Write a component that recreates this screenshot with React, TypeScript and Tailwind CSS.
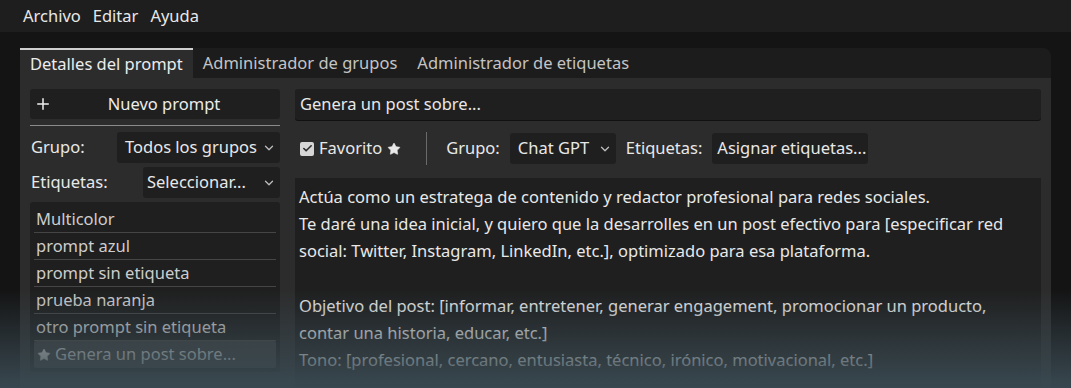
import { ChevronDown, Plus, Star, Check } from 'lucide-react';

const menus = ['Archivo', 'Editar', 'Ayuda'];
const tabs = ['Detalles del prompt', 'Administrador de grupos', 'Administrador de etiquetas'];

const prompts = [
  'Multicolor',
  'prompt azul',
  'prompt sin etiqueta',
  'prueba naranja',
  'otro prompt sin etiqueta',
];

const lines = [
  'Actúa como un estratega de contenido y redactor profesional para redes sociales.',
  'Te daré una idea inicial, y quiero que la desarrolles en un post efectivo para [especificar red',
  'social: Twitter, Instagram, LinkedIn, etc.], optimizado para esa plataforma.',
  '',
  'Objetivo del post: [informar, entretener, generar engagement, promocionar un producto,',
  'contar una historia, educar, etc.]',
  'Tono: [profesional, cercano, entusiasta, técnico, irónico, motivacional, etc.]',
];

const Chevron = () => <ChevronDown size={14} strokeWidth={2.2} className="text-[#bdbdbd] shrink-0" />;

const App = () => {
  return (
    <div className="relative h-[388px] w-full overflow-hidden bg-[#141414] font-['Noto_Sans',sans-serif] text-[16.5px] text-[#e8e8e8]">
      {/* menu bar */}
      <div className="flex h-[32px] items-center gap-[12px] bg-[#1e1e1e] pl-[23px]">
        {menus.map((m) => (
          <span key={m}>{m}</span>
        ))}
      </div>

      <div className="ml-[20px] mt-[16px] w-[1031px]">
        {/* tabs */}
        <div className="flex h-[30px] rounded-tr-[8px] bg-[#1c1c1c]">
          {tabs.map((t, i) =>
            i === 0 ? (
              <div
                key={t}
                className="flex items-center border-t-2 border-[#cfcfcf] bg-[#2c2c2c] px-[10px] text-[#ececec]"
              >
                {t}
              </div>
            ) : (
              <div key={t} className="flex items-center px-[10px] text-[#c4c4c4]">
                {t}
              </div>
            )
          )}
        </div>

        {/* body */}
        <div className="flex h-[320px] gap-[15px] bg-[#2c2c2c] px-[10px] pt-[11px]">
          {/* left column */}
          <div className="flex w-[250px] shrink-0 flex-col">
            <button className="flex h-[30px] items-center rounded-[3px] bg-[#1f1f1f] pl-[4px] text-[#ececec]">
              <Plus size={18} strokeWidth={2} className="text-[#f0f0f0]" />
              <span className="flex-1 pr-[4px] text-center">Nuevo prompt</span>
            </button>
            <div className="mt-[6px] h-px bg-[#8a8a8a]" />

            <div className="mt-[6px] flex h-[31px] items-center justify-between">
              <span className="pl-px">Grupo:</span>
              <div className="flex h-[31px] w-[163px] items-center justify-between rounded-[3px] bg-[#1f1f1f] pl-[8px] pr-[4px]">
                <span>Todos los grupos</span>
                <Chevron />
              </div>
            </div>

            <div className="mt-[4px] flex h-[31px] items-center justify-between">
              <span className="pl-px">Etiquetas:</span>
              <div className="flex h-[31px] w-[137px] items-center justify-between rounded-[3px] bg-[#1f1f1f] pl-[4px] pr-[4px]">
                <span>Seleccionar...</span>
                <Chevron />
              </div>
            </div>

            <div className="mt-[4px] flex h-[170px] flex-col rounded-[3px] bg-[#1f1f1f] px-[4px] pt-[4px]">
              {prompts.map((p) => (
                <div
                  key={p}
                  className="flex h-[27px] items-center border-b border-[#454545] pl-[2px] text-[#cdcdcd]"
                >
                  {p}
                </div>
              ))}
              <div className="flex h-[27px] items-center gap-[4px] rounded-[2px] bg-[#3b3b3b] pl-[3px] text-[#cdcdcd]">
                <Star size={14} fill="currentColor" strokeWidth={1} />
                <span>Genera un post sobre...</span>
              </div>
            </div>
          </div>

          {/* right column */}
          <div className="flex w-[746px] flex-col">
            <div className="flex h-[31px] items-center rounded-[3px] bg-[#1f1f1f] pl-[5px] shadow-[0_1px_0_#111]">
              Genera un post sobre...
            </div>

            <div className="mt-[13px] flex h-[31px] items-center">
              <div className="ml-[5px] flex h-[14px] w-[14px] items-center justify-center rounded-[2px] bg-[#d6d6d6]">
                <Check size={11} strokeWidth={3.5} className="text-[#2a2a2a]" />
              </div>
              <span className="ml-[5px]">Favorito</span>
              <Star size={14} fill="#e8e8e8" strokeWidth={1} className="ml-[5px] text-[#e8e8e8]" />
              <div className="ml-[25px] h-[33px] w-px bg-[#6a6a6a]" />
              <span className="ml-[19px]">Grupo:</span>
              <div className="ml-[10px] flex h-[31px] w-[106px] items-center justify-between rounded-[3px] bg-[#1f1f1f] pl-[8px] pr-[4px]">
                <span>Chat GPT</span>
                <Chevron />
              </div>
              <span className="ml-[10px]">Etiquetas:</span>
              <div className="ml-[10px] flex h-[31px] w-[156px] items-center rounded-[3px] bg-[#1f1f1f] pl-[5px]">
                Asignar etiquetas...
              </div>
            </div>

            <div className="mt-[14px] flex-1 bg-[#1f1f1f] pl-[4px] pt-[5px] leading-[27.2px]">
              {lines.map((l, i) => (
                <div key={i} className="h-[27.2px] whitespace-nowrap">
                  {l}
                </div>
              ))}
            </div>
          </div>
        </div>
      </div>

      {/* bottom fade */}
      <div className="pointer-events-none absolute bottom-0 left-0 h-[98px] w-full bg-linear-to-b from-[#3a4a52]/0 via-[#3a4a52]/50 to-[#3a4a52]/95" />
    </div>
  );
};

export default App;
